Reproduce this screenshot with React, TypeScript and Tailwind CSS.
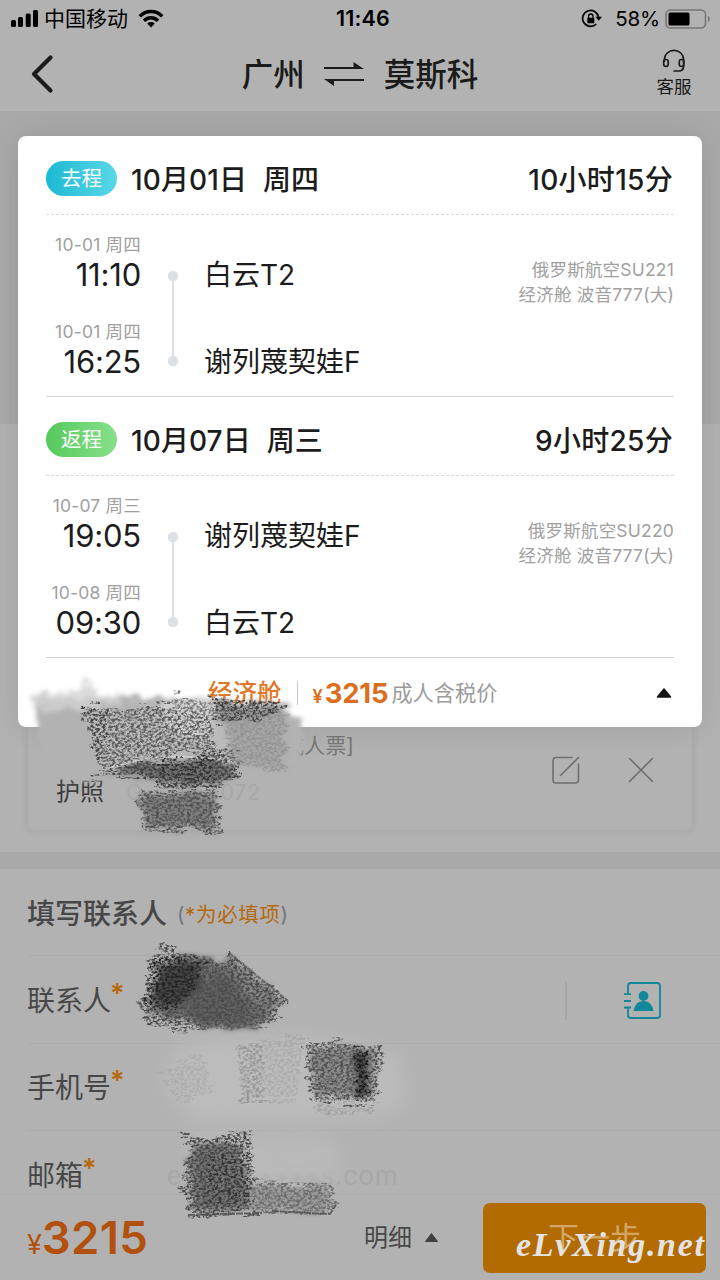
import React from 'react';

interface Stop {
  date: string;
  time: string;
  place: string;
}

interface Leg {
  tag: string;
  tagClass: string;
  day: string;
  weekday: string;
  duration: string;
  flight: string;
  cabin: string;
  stops: Stop[];
}

const legs: Leg[] = [
  {
    tag: '去程',
    tagClass: 'bg-gradient-to-r from-[#16b9d2] to-[#57d8e8]',
    day: '10月01日',
    weekday: '周四',
    duration: '10小时15分',
    flight: '俄罗斯航空SU221',
    cabin: '经济舱 波音777(大)',
    stops: [
      { date: '10-01 周四', time: '11:10', place: '白云T2' },
      { date: '10-01 周四', time: '16:25', place: '谢列蔑契娃F' },
    ],
  },
  {
    tag: '返程',
    tagClass: 'bg-gradient-to-r from-[#55c95c] to-[#86e08a]',
    day: '10月07日',
    weekday: '周三',
    duration: '9小时25分',
    flight: '俄罗斯航空SU220',
    cabin: '经济舱 波音777(大)',
    stops: [
      { date: '10-07 周三', time: '19:05', place: '谢列蔑契娃F' },
      { date: '10-08 周四', time: '09:30', place: '白云T2' },
    ],
  },
];

const StatusBar: React.FC = () => (
  <div className="relative flex h-[37px] items-center justify-between pl-[10px] pr-[9px] text-black">
    <div className="flex items-center">
      <svg width="30" height="20" viewBox="0 0 30 20">
        <rect x="1" y="11" width="5" height="7" rx="1.5" />
        <rect x="8" y="8" width="5" height="10" rx="1.5" />
        <rect x="15.7" y="4.5" width="5" height="13.5" rx="1.5" />
        <rect x="23" y="1" width="5" height="17" rx="1.5" />
      </svg>
      <span className="ml-1 text-[21px] leading-[37px]">中国移动</span>
      <svg className="ml-[10px]" width="26" height="20" viewBox="0 0 26 20" fill="none" stroke="#000" strokeWidth="3.4">
        <path d="M1.8 7.4C8 .9 18 .9 24.2 7.4" />
        <path d="M6 11.7c4-4 10-4 14 0" />
        <path d="M13 18.4l-3.8-3.9c2.3-1.9 5.3-1.9 7.6 0z" fill="#000" stroke="none" />
      </svg>
    </div>
    <span className="absolute inset-x-0 pl-[6px] text-center text-[21.5px] font-semibold leading-[37px] tracking-[0.2px]">11:46</span>
    <div className="flex items-center">
      <svg width="22" height="20" viewBox="0 0 22 20" fill="none" stroke="#000" strokeWidth="1.7">
        <path d="M15.3 15A8 8 0 1 1 17.5 8" />
        <path d="M14.5 7.8h6.500l-3.200 4z" fill="#000" stroke="none" />
        <rect x="6.300" y="8.700" width="7" height="5.600" rx="0.800" fill="#000" stroke="none" />
        <path d="M7.600 9V7.200a2.200 2.200 0 0 1 4.400 0V9" strokeWidth="1.300" />
      </svg>
      <span className="ml-[12px] text-[20.5px] leading-[37px] tracking-[-0.2px]">58%</span>
      <svg className="ml-[5px]" width="46" height="20" viewBox="0 0 46 20">
        <rect x="1" y="1" width="39.5" height="18" rx="4.5" fill="none" stroke="#777" strokeWidth="1.6" />
        <rect x="3.5" y="3.5" width="21" height="13" rx="1.5" />
        <path d="M43 7c2.5 1 2.5 5 0 6z" fill="#777" />
      </svg>
    </div>
  </div>
);

const NavBar: React.FC = () => (
  <header className="flex h-[74px] items-center justify-between pl-[30px] pr-[28px] text-[#1b1b1b]">
    <svg className="w-[36px]" width="36" height="40" viewBox="0 0 36 40" fill="none" stroke="currentColor" strokeWidth="4.2" strokeLinecap="round" strokeLinejoin="round">
      <path d="M20.5 3.5L4 20l16.5 16.5" />
    </svg>
    <h1 className="mr-[2px] flex items-center text-[31.5px] font-medium leading-[74px]">
      <span className="pt-px">广州</span>
      <svg className="mx-[19px]" width="41" height="28" viewBox="0 0 41 28" fill="currentColor">
        <path d="M0 7h29.500V2L40 9H0z" />
        <path d="M40 19v2H10v5L0 19z" />
      </svg>
      <span className="pt-px">莫斯科</span>
    </h1>
    <div className="flex w-[36px] flex-col items-center">
      <svg width="24" height="24" viewBox="0 0 24 24" fill="none" stroke="currentColor" strokeWidth="1.7" strokeLinecap="round">
        <path d="M2.4 12V10.5a9.6 9.2 0 0 1 19.2 0V17c0 3-2 5-5 5h-4.5" />
        <rect x="1.7" y="10.5" width="4.5" height="7" rx="2.2" />
        <rect x="17.3" y="10.5" width="4.5" height="7" rx="2.2" />
      </svg>
      <span className="text-[17.5px] leading-[27px]">客服</span>
    </div>
  </header>
);

const LegBlock: React.FC<{ leg: Leg }> = ({ leg }) => (
  <section>
    <div className="flex h-[79px] items-center border-b border-dashed border-[#d9d9d9] pt-[8px] text-[28px] font-medium text-[#1c1c1c]">
      <span className={`-mt-px flex h-[35px] w-[71px] items-center justify-center rounded-full pt-px text-[20.5px] font-normal text-white ${leg.tagClass}`}>
        {leg.tag}
      </span>
      <span className="ml-[14px] pt-px tracking-[0.1px]">{leg.day}</span>
      <span className="ml-[16px] pt-px">{leg.weekday}</span>
      <span className="ml-auto mr-[1px] pt-px tracking-[0.3px]">{leg.duration}</span>
    </div>
    <div className="flex h-[182px] border-b border-[#d2d2d2] pt-[20px]">
      <div className="flex w-[95px] flex-col gap-[29px] text-right">
        {leg.stops.map((stop) => (
          <div key={stop.date + stop.time} className="flex h-[58px] flex-col items-end">
            <div className="whitespace-nowrap text-[17.5px] leading-[20px] tracking-[0.2px] text-[#a0a0a0]">{stop.date}</div>
            <div className="text-[31px] leading-[39px] tracking-[-0.2px] text-[#1c1c1c]">{stop.time}</div>
          </div>
        ))}
      </div>
      <svg className="ml-[26px] mt-[35px]" width="12" height="97" viewBox="0 0 12 97" fill="#dde1e6">
        <rect x="5" y="6" width="2" height="86" />
        <circle cx="6" cy="6" r="5.3" />
        <circle cx="6" cy="91" r="5.3" />
      </svg>
      <div className="ml-[25px] mt-[20px] flex flex-col gap-[47px] text-[28px] leading-[40px] text-[#1c1c1c]">
        {leg.stops.map((stop) => (
          <span key={stop.place}>{stop.place}</span>
        ))}
      </div>
      <div className="ml-auto mt-[23px] text-right text-[17.5px] leading-[24.5px] tracking-[0.2px] text-[#a0a0a0]">
        <div>{leg.flight}</div>
        <div>{leg.cabin}</div>
      </div>
    </div>
  </section>
);

const FlightCard: React.FC = () => (
  <div className="absolute left-[18px] top-[136px] h-[591px] w-[684px] rounded-[8px] bg-white px-[28px] shadow-[0_0_30px_rgba(0,0,0,0.1)]">
    {legs.map((leg) => (
      <LegBlock key={leg.tag} leg={leg} />
    ))}
    <div className="flex h-[69px] items-center pl-[162px] pt-px">
      <span className="text-[24.5px] font-medium text-[#e07828]">经济舱</span>
      <span className="ml-[15px] h-[24px] w-px bg-[#c8c8c8]" />
      <span className="ml-[15px] flex items-baseline text-[#dc6e20]">
        <span className="text-[18px] font-semibold">¥</span>
        <span className="ml-[2px] text-[27.5px] font-bold leading-[40px] tracking-[-0.2px]">3215</span>
      </span>
      <span className="ml-[3px] pt-px text-[21.2px] text-[#9c9c9c]">成人含税价</span>
      <svg className="ml-auto mr-[2px]" width="16" height="12" viewBox="0 0 16 12">
        <path d="M8 2L14.5 10H1.5z" fill="#151515" stroke="#151515" strokeWidth="1.5" strokeLinejoin="round" />
      </svg>
    </div>
  </div>
);

const PassengerArea: React.FC = () => (
  <div className="h-[428px] px-[28px]">
    <div className="flex h-[406px] flex-col justify-end rounded-[6px] px-[28px] shadow-[0_1px_8px_rgba(0,0,0,0.09)]">
      <div className="flex items-center justify-between pb-[15px] pr-[10px]">
        <div className="w-[298px]">
          <div className="text-right text-[21px] leading-[46px] text-[#777]">[成人票]</div>
          <div className="flex items-center text-[24px] leading-[46px] text-[#3c3c3c]">
            <span>护照</span>
            <span className="ml-[22px] text-[22px] tracking-[0.5px] text-[#a8a8a8]">G••••••072</span>
          </div>
        </div>
        <div className="mt-[2px] flex items-center gap-[48px]">
          <svg width="28" height="28" viewBox="0 0 28 28" fill="none" stroke="#6f6f6f" strokeWidth="1.6" strokeLinecap="round">
            <path d="M20 1.5H4A3 3 0 0 0 1 4.5V24a3 3 0 0 0 3 3h19.5a3 3 0 0 0 3-3V8" />
            <path d="M8.5 19.5L26.5 1.5" />
          </svg>
          <svg width="26" height="26" viewBox="0 0 26 26" fill="none" stroke="#6f6f6f" strokeWidth="1.6" strokeLinecap="round">
            <path d="M1.5 1.5l23 23M24.5 1.5l-23 23" />
          </svg>
        </div>
      </div>
    </div>
  </div>
);

const Field: React.FC<{ label: string; children?: React.ReactNode }> = ({ label, children }) => (
  <div className="ml-[27px] flex h-[87.5px] items-center border-b border-[#ababab] pt-[3px] text-[28px] text-[#474747]">
    <span>{label}</span>
    <span className="-ml-px mb-[14px] text-[27px] font-semibold leading-[30px] text-[#b5670c]">*</span>
    {children}
  </div>
);

const ContactForm: React.FC = () => (
  <div className="h-[325px] overflow-hidden">
    <div className="ml-[27px] flex h-[87px] items-center border-b border-[#ababab] pt-[4px]">
      <span className="text-[28px] font-medium text-[#474747]">填写联系人</span>
      <span className="ml-[10px] mt-[3px] text-[20.5px] tracking-[0.6px] text-[#6f7880]">
        (<span className="text-[#b5670c]">*为必填项</span>)
      </span>
    </div>
    <Field label="联系人">
      <span className="ml-auto h-[38px] w-[2px] bg-[#a7a7a7]" />
      <svg className="ml-[56px] mr-[59px]" width="38" height="38" viewBox="0 0 38 38" fill="none" stroke="#11889a" strokeWidth="1.8">
        <path d="M5 12V4a3 3 0 0 1 3-3h26a3 3 0 0 1 3 3v29a3 3 0 0 1-3 3H8a3 3 0 0 1-3-3v-7" />
        <path d="M1 12.2h7M1 19h7M1 25.5h7" />
        <circle cx="20.5" cy="14" r="4.9" fill="#11889a" stroke="none" />
        <path d="M10.5 29c1-6 4.5-10 10-10s9 4 10 10z" fill="#11889a" stroke="none" />
      </svg>
    </Field>
    <Field label="手机号" />
    <Field label="邮箱">
      <span className="ml-[70px] text-[26px] tracking-[0.7px] text-[#a8a8a8]">e•••••••••s.com</span>
    </Field>
  </div>
);

const BottomBar: React.FC = () => (
  <footer className="flex h-[86px] items-center border-t border-[#acacac] pl-[27px] pr-[14px]">
    <div className="flex items-baseline text-[#b2500e]">
      <span className="text-[27px]">¥</span>
      <span className="text-[45.5px] font-semibold leading-[86px] tracking-[0.3px]">3215</span>
    </div>
    <div className="ml-auto flex items-center">
      <span className="pt-px text-[24px] text-[#474747]">明细</span>
      <svg className="ml-[12px]" width="15" height="11" viewBox="0 0 15 11">
        <path d="M7.5 1.5L13.5 9.5h-12z" fill="#3f3f3f" stroke="#3f3f3f" strokeLinejoin="round" />
      </svg>
      <button className="relative ml-[44px] h-[70px] w-[223px] rounded-[7px] bg-[#b26b00] text-[31px] leading-[68px] text-[#d3a666]">
        下一步
        <span className="absolute left-[33px] top-[14px] whitespace-nowrap font-['Liberation_Serif',serif] text-[34px] font-bold italic leading-[56px] tracking-[1.7px] text-[#e4e4e4]">
          eLvXing.net
        </span>
      </button>
    </div>
  </footer>
);

// Charcoal strokes that hide the private fields
const Scribbles: React.FC = () => (
  <svg className="pointer-events-none absolute left-0 top-0" width="720" height="1280" viewBox="0 0 720 1280">
    <defs>
      <filter id="grain" x="-10%" y="-10%" width="120%" height="120%" colorInterpolationFilters="sRGB">
        <feTurbulence type="fractalNoise" baseFrequency="0.04 0.2" numOctaves="2" seed="4" result="wave" />
        <feDisplacementMap in="SourceGraphic" in2="wave" scale="20" xChannelSelector="R" yChannelSelector="G" result="rough" />
        <feTurbulence type="fractalNoise" baseFrequency="0.32 0.42" numOctaves="3" seed="9" />
        <feColorMatrix values="0 0 0 0 0  0 0 0 0 0  0 0 0 0 0  3.6 0 0 0 -1.4" result="dots" />
        <feComposite in="rough" in2="dots" operator="in" />
        <feGaussianBlur stdDeviation="0.6" />
      </filter>
      <filter id="rough" x="-10%" y="-10%" width="120%" height="120%" colorInterpolationFilters="sRGB">
        <feTurbulence type="fractalNoise" baseFrequency="0.04 0.2" numOctaves="2" seed="4" result="wave" />
        <feDisplacementMap in="SourceGraphic" in2="wave" scale="20" xChannelSelector="R" yChannelSelector="G" />
        <feGaussianBlur stdDeviation="2.6" />
      </filter>
      <filter id="smear" x="-20%" y="-20%" width="140%" height="140%" colorInterpolationFilters="sRGB">
        <feTurbulence type="fractalNoise" baseFrequency="0.08 0.12" numOctaves="4" seed="2" result="wave" />
        <feDisplacementMap in="SourceGraphic" in2="wave" scale="20" xChannelSelector="R" yChannelSelector="G" />
        <feGaussianBlur stdDeviation="2" />
      </filter>
      <filter id="haze" x="-20%" y="-20%" width="140%" height="140%">
        <feGaussianBlur stdDeviation="9" />
      </filter>
    </defs>

    {/* passenger */}
    <g filter="url(#smear)">
      <path d="M28 698L50 698 110 696 180 700 286 706 302 726 306 736 304 758 282 774 130 782 60 780 40 752 38 720z" fill="#b2b2b2" />
      <path d="M26 696L78 690 84 676 92 692 120 696 120 706 40 712z" fill="#d2d2d2" opacity="0.8" />
    </g>
    <g filter="url(#rough)">
      <path d="M86 708L176 704 232 706 236 756 190 754 102 766z" fill="#bababa" />
      <path d="M158 702L212 698 212 740 168 730z" fill="#d0d0d0" />
      <path d="M214 700L284 708 268 716 220 722z" fill="#909090" />
      <path d="M224 722L284 712 284 768 236 764z" fill="#a6a6a6" />
      <path d="M96 774L150 761 205 759 236 766 234 775 208 784 158 782 142 776z" fill="#707070" />
      <path d="M143 794h70l4 34h-70z" fill="#808080" />
    </g>
    <path d="M110 768C150 754 180 754 232 761" fill="none" stroke="#d4d4d4" strokeWidth="2" opacity="0.8" />
    <g filter="url(#grain)">
      <path d="M82 706L176 706 212 708 214 752 170 754 100 768 92 738z" fill="#5c5c5c" />
      <path d="M82 706h22l6 12-8 44H94z" fill="#444" />
      <path d="M174 694L238 712 234 718 170 712z" fill="#777" />
      <path d="M210 694L288 706 262 718 216 724z" fill="#404040" />
      <path d="M210 744L240 750 238 766 200 756z" fill="#484848" />
      <path d="M224 724L286 714 284 774 230 764z" fill="#808080" opacity="0.5" />
      <path d="M90 778L100 770 160 759 205 757 240 764 240 778 210 788 158 786 140 776z" fill="#404040" />
      <path d="M150 758h60v22h-50z" fill="#303030" />
      <path d="M138 791h78l6 40h-78z" fill="#525252" />
    </g>

    {/* contact name */}
    <g filter="url(#rough)">
      <path d="M156 962L192 956 222 962 232 958 280 1000 266 1020 256 1028 206 1028 150 1010z" fill="#6e6e6e" />
      <path d="M158 964L200 962 202 988 180 1006 150 1002z" fill="#454545" />
      <path d="M222 968L232 960 276 1000 266 1014z" fill="#848484" />
      <path d="M182 1002L220 974 248 1002 248 1028 202 1028z" fill="#616161" />
    </g>
    <g filter="url(#grain)">
      <path d="M150 956L166 946 216 960 226 964 232 952 286 1000 274 1024 206 1032 146 1028 142 1008z" fill="#4a4a4a" />
      <path d="M152 958L206 960 194 990 174 1012 144 1006z" fill="#242424" />
    </g>
    <path d="M229 953L287 1000" stroke="#555" strokeWidth="2" strokeDasharray="5 1" opacity="0.7" />

    {/* phone */}
    <path d="M180 1044L240 1038 306 1036 400 1054 406 1104 380 1116 290 1122 190 1120 162 1082z" fill="#bcbcbc" filter="url(#haze)" />
    <g filter="url(#rough)">
      <path d="M312 1046L376 1050 372 1096 314 1098z" fill="#8c8c8c" />
      <path d="M353 1052h14v46h-10z" fill="#454545" />
    </g>
    <g filter="url(#grain)">
      <path d="M306 1041L384 1047 376 1102 310 1102z" fill="#525252" />
      <path d="M353 1050h14v48h-10z" fill="#1c1c1c" />
      <path d="M236 1044L262 1044 266 1100 242 1100z" fill="#808080" opacity="0.6" />
      <path d="M258 1044L304 1034 296 1100 262 1100z" fill="#909090" opacity="0.4" />
      <path d="M160 1072L200 1054 214 1090 180 1104z" fill="#999" opacity="0.4" />
      <path d="M318 1104h56v12h-56z" fill="#888" opacity="0.5" />
    </g>

    {/* mail */}
    <path d="M190 1134l144 4 8 40-148 4z" fill="#bababa" filter="url(#haze)" />
    <g filter="url(#rough)">
      <path d="M190 1146L240 1142 248 1184 246 1210 194 1210z" fill="#747474" />
      <path d="M250 1188L324 1188 330 1204 324 1209 252 1208z" fill="#9a9a9a" />
    </g>
    <g filter="url(#grain)">
      <path d="M180 1138L250 1132 254 1184 262 1215 188 1216 180 1182 190 1156z" fill="#454545" />
      <path d="M204 1154h44v50h-40z" fill="#343434" />
      <path d="M250 1182L330 1184 338 1206 330 1214 252 1213z" fill="#6c6c6c" />
    </g>
    <path d="M188 1215L262 1213M272 1211L330 1214 336 1205" fill="none" stroke="#4c4c4c" strokeWidth="1.8" strokeDasharray="7 1" opacity="0.8" />
  </svg>
);

const App: React.FC = () => {
  return (
    <div className="relative h-[1280px] w-[720px] overflow-hidden bg-[#b2b2b2] font-['Inter','Noto_Sans_CJK_SC',sans-serif]">
      <StatusBar />
      <NavBar />
      <div className="h-[313px] bg-[#a9a9a9]" />
      <PassengerArea />
      <div className="h-[17px] bg-[#a9a9a9]" />
      <ContactForm />
      <BottomBar />
      <FlightCard />
      <Scribbles />
    </div>
  );
};

export default App;
